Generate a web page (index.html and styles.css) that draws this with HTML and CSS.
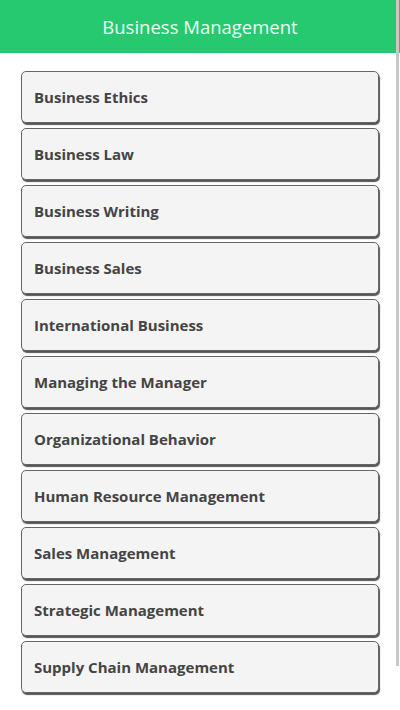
FILE: index.html
```html
<!DOCTYPE html>
<html>
<head>
<meta charset="utf-8">
<link rel="stylesheet" href="styles.css">
</head>
<body>
<div class="app">
  <header class="topbar">Business Management</header>
  <ul class="list">
    <li class="item">Business Ethics</li>
    <li class="item">Business Law</li>
    <li class="item">Business Writing</li>
    <li class="item">Business Sales</li>
    <li class="item">International Business</li>
    <li class="item">Managing the Manager</li>
    <li class="item">Organizational Behavior</li>
    <li class="item">Human Resource Management</li>
    <li class="item">Sales Management</li>
    <li class="item">Strategic Management</li>
    <li class="item">Supply Chain Management</li>
  </ul>
</div>
<div class="scrollbar"></div>
</body>
</html>
```
FILE: styles.css
```css
html, body {
  margin: 0;
  padding: 0;
  background: #ffffff;
  overflow: hidden;
}
.app {
  width: 400px;
  height: 710px;
  display: flex;
  flex-direction: column;
}
.topbar {
  height: 53px;
  background: #26c96f;
  color: #e9fff1;
  font-family: "Open Sans", sans-serif;
  font-size: 18.5px;
  display: flex;
  align-items: center;
  justify-content: center;
  box-sizing: border-box;
}
.list {
  list-style: none;
  margin: 0;
  padding: 18px 21px 0 21px;
  display: flex;
  flex-direction: column;
  gap: 5px;
  width: 358px;
}
.item {
  height: 52px;
  box-sizing: border-box;
  background: #f4f4f4;
  border: 1px solid #666;
  border-radius: 5px;
  box-shadow: 1px 2px 1px #555;
  display: flex;
  align-items: center;
  padding-left: 12px;
  padding-bottom: 1px;
  font-family: "Open Sans", sans-serif;
  font-weight: 700;
  font-size: 15px;
  color: #444;
}
.scrollbar {
  position: absolute;
  top: 0;
  right: 1px;
  width: 3px;
  height: 666px;
  background: #c8c8c8;
}
```
